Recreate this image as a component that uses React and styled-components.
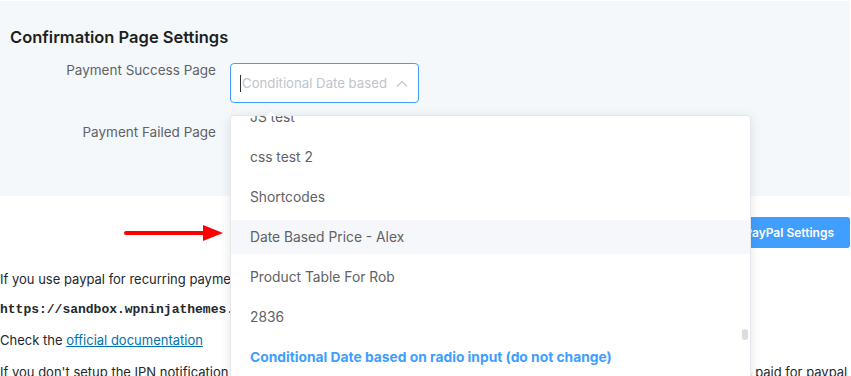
import styled, { createGlobalStyle } from "styled-components";

const GlobalStyle = createGlobalStyle`
  body {
    margin: 0;
    background: #fff;
    font-family: Inter, "Noto Sans", sans-serif;
  }
`;

const Page = styled.div`
  position: relative;
  width: 851px;
  height: 376px;
  overflow: hidden;
  padding-top: 1px;
  box-sizing: border-box;
`;

const Panel = styled.section`
  width: 850px;
  box-sizing: border-box;
  background: #f5f8fb;
  border-radius: 0 0 4px 0;
  padding: 25px 0 31px 10px;
`;

const Heading = styled.h3`
  margin: 0 0 15px;
  font-size: 16.5px;
  line-height: 22px;
  font-weight: 600;
  color: #1e1f21;
`;

const Row = styled.div`
  display: flex;
  align-items: flex-start;
  gap: 14px;
  margin-bottom: ${(p) => (p.$last ? "0" : "22px")};
`;

const Label = styled.label`
  width: 206px;
  text-align: right;
  font-size: 13.5px;
  line-height: 14px;
  color: #606266;
`;

const Select = styled.div`
  width: 189px;
  height: 40px;
  box-sizing: border-box;
  border: 1px solid ${(p) => (p.$focus ? "#409eff" : "#dcdfe6")};
  border-radius: 4px;
  background: #fff;
  padding: 0 10px 0 9px;
  display: flex;
  align-items: center;
`;

const Caret = styled.span`
  width: 1px;
  height: 17px;
  margin-right: 1px;
  background: #303133;
`;

const Placeholder = styled.span`
  flex: 1;
  overflow: hidden;
  white-space: nowrap;
  margin-right: 6px;
  font-size: 13.2px;
  color: #c0c4cc;
`;

const ButtonRow = styled.div`
  width: 850px;
  display: flex;
  justify-content: flex-end;
  padding-top: 21px;
`;

const Button = styled.button`
  height: 31px;
  padding: 0 16px;
  border: none;
  border-radius: 3px;
  background: #409eff;
  color: #fff;
  font-family: inherit;
  font-size: 12px;
  font-weight: 600;
`;

const Content = styled.div`
  padding-top: 21px;
  font-size: 13px;
  color: #23282d;
`;

const Para = styled.p`
  margin: 0 0 12px;
  line-height: 20px;
  white-space: nowrap;
`;

const Code = styled.p`
  margin: 0 0 12px;
  line-height: 17px;
  font-family: "Liberation Mono", monospace;
  font-size: 13px;
  font-weight: 700;
  white-space: nowrap;
`;

const Link = styled.a`
  color: #0073aa;
  text-decoration: underline;
`;

const Dropdown = styled.div`
  position: absolute;
  left: 230px;
  top: 115px;
  width: 521px;
  height: 280px;
  box-sizing: border-box;
  background: #fff;
  border: 1px solid #e4e7ed;
  border-radius: 4px;
  box-shadow: 0 2px 12px 0 rgba(0, 0, 0, 0.1);

  &::before {
    content: "";
    position: absolute;
    top: -6px;
    left: 34px;
    border: 6px solid transparent;
    border-top: 0;
    border-bottom-color: #e4e7ed;
  }
  &::after {
    content: "";
    position: absolute;
    top: -5px;
    left: 35px;
    border: 5px solid transparent;
    border-top: 0;
    border-bottom-color: #fff;
  }
`;

const ListViewport = styled.div`
  height: 100%;
  overflow: hidden;
`;

const List = styled.ul`
  list-style: none;
  margin: -16px 0 0;
  padding: 0;
  display: flex;
  flex-direction: column;
  gap: 6px;
`;

const Item = styled.li`
  height: 34px;
  line-height: 34px;
  padding: 0 20px 0 19px;
  font-size: 13.8px;
  white-space: nowrap;
  color: ${(p) => (p.$selected ? "#409eff" : "#606266")};
  font-weight: ${(p) => (p.$selected ? 700 : 400)};
  background: ${(p) => (p.$hover ? "#f5f7fa" : "transparent")};
`;

const Thumb = styled.div`
  position: absolute;
  right: 2px;
  top: 213px;
  width: 6px;
  height: 11px;
  border-radius: 3px;
  background: #dcdcdc;
`;

const Pointer = styled.svg`
  position: absolute;
  left: 120px;
  top: 222px;
`;

const options = [
  { label: "JS test" },
  { label: "css test 2" },
  { label: "Shortcodes" },
  { label: "Date Based Price - Alex", hover: true },
  { label: "Product Table For Rob" },
  { label: "2836" },
  { label: "Conditional Date based on radio input (do not change)", selected: true },
];

function ChevronUp() {
  return (
    <svg width="12" height="7" viewBox="0 0 12 7">
      <polyline points="1,6.5 6,1.5 11,6.5" fill="none" stroke="#c0c4cc" strokeWidth="1.2" />
    </svg>
  );
}

function App() {
  return (
    <Page>
      <GlobalStyle />
      <Panel>
        <Heading>Confirmation Page Settings</Heading>
        <Row>
          <Label>Payment Success Page</Label>
          <Select $focus>
            <Caret />
            <Placeholder>Conditional Date based</Placeholder>
            <ChevronUp />
          </Select>
        </Row>
        <Row $last>
          <Label>Payment Failed Page</Label>
          <Select>
            <Placeholder>Select</Placeholder>
          </Select>
        </Row>
      </Panel>
      <ButtonRow>
        <Button>Save PayPal Settings</Button>
      </ButtonRow>
      <Content>
        <Para>If you use paypal for recurring payments, please setup IPN URL:</Para>
        <Code>https://sandbox.wpninjathemes.com/?wpf_paypal_listener=1</Code>
        <Para>
          Check the <Link href="#">official documentation</Link>
        </Para>
        <Para>
          If you don't setup the IPN notification then it will still work for single payments but recurring payment will not be marked as  paid for paypal subscription
        </Para>
      </Content>

      <Pointer width="110" height="22" viewBox="0 0 110 22">
        <line x1="6" y1="11" x2="86" y2="11" stroke="#ff0000" strokeWidth="4" strokeLinecap="round" />
        <polygon points="83,3 103,11 83,19" fill="#ff0000" />
      </Pointer>

      <Dropdown>
        <ListViewport>
          <List>
            {options.map((o) => (
              <Item key={o.label} $hover={o.hover} $selected={o.selected}>
                {o.label}
              </Item>
            ))}
          </List>
        </ListViewport>
        <Thumb />
      </Dropdown>
    </Page>
  );
}

export default App;
